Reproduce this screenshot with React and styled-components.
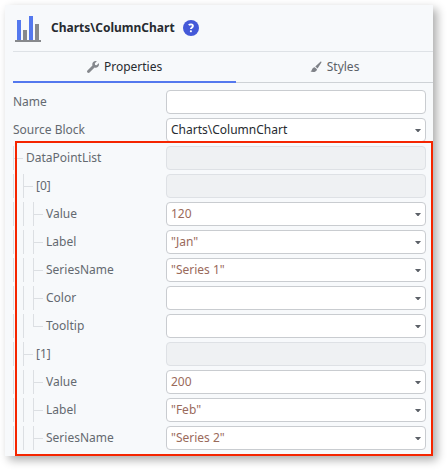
import React, { useId, useState } from "react";
import styled, { createGlobalStyle, css } from "styled-components";

const GlobalStyle = createGlobalStyle`
  *, *::before, *::after { box-sizing: border-box; }
  body {
    margin: 0;
    background: #fff;
    color: #272b30;
    font: 12px/20px "Noto Sans", "Open Sans", sans-serif;
  }
  button, input, select { font: inherit; }
`;

const Panel = styled.main`
  margin: 5px 15px 15px 5px;
  padding: 0 0 6px 8px;
  background: #f7f9fb;
  box-shadow: 4px 4px 9px rgba(0, 0, 0, 0.33);
`;

const Header = styled.header`
  display: flex;
  align-items: center;
  height: 47px;
  border-bottom: 1px solid #dee2e6;
`;

const Title = styled.h1`
  margin: 0 8px 0 8px;
  font-size: 12px;
  line-height: 20px;
  font-weight: 700;
`;

const HelpButton = styled.button`
  display: flex;
  padding: 0;
  border: 0;
  background: none;
`;

const Tabs = styled.div`
  display: flex;
  height: 31px;
`;

const Tab = styled.button`
  display: flex;
  flex: ${(p) => (p.$wide ? 17 : 15)} 1 0;
  align-items: center;
  justify-content: center;
  gap: 5px;
  padding: 0 0 2px;
  border: 0;
  background: none;
  color: #5c6168;
  box-shadow: inset 0 -1px #ced2d6;
  ${(p) =>
    p.$active &&
    css`
      color: #272b30;
      box-shadow: inset 0 -2px #5478ee;
    `}
`;

const Rows = styled.div`
  display: grid;
  gap: 4px;
`;

const Fields = styled(Rows)`
  padding: 7px 7px 0 0;
`;

const Group = styled(Rows)`
  position: relative;
`;

const Highlight = styled.div`
  position: absolute;
  inset: -5px -7px -6px 2px;
  border: 2px solid #f52500;
  pointer-events: none;
`;

const Row = styled.div`
  display: grid;
  grid-template-columns: minmax(0, 153fr) minmax(0, 260fr);
  height: 24px;
`;

const LabelCell = styled.div`
  display: flex;
`;

const Label = styled.label`
  padding-left: ${(p) => (p.$nested ? 3 : 0)}px;
  line-height: 24px;
  color: #646970;
  white-space: nowrap;
`;

const Guide = styled.span`
  width: 10px;
  border-left: 1px solid #dcdfe3;
`;

const Branch = styled.span`
  display: flex;
  flex-direction: column;
  width: 10px;
  &::before {
    content: "";
    height: 13px;
    border: solid #dcdfe3;
    border-width: 0 0 1px 1px;
  }
  &::after {
    content: "";
    flex: 1;
    border-left: 1px solid ${(p) => (p.$last ? "transparent" : "#dcdfe3")};
  }
`;

const control = css`
  width: 100%;
  height: 24px;
  padding: 0 20px 0 4px;
  border: 1px solid #c9ccd0;
  border-radius: 4px;
  background: #fff;
  color: #272b30;
`;

const TextBox = styled.input`
  ${control}
  &:disabled {
    border-color: #dee1e5;
    background: #eff1f3;
  }
`;

const SelectWrap = styled.div`
  position: relative;
`;

const Select = styled.select`
  ${control}
  display: block;
  appearance: none;
  color: ${(p) => (p.$expression ? "#9a6a5b" : "#272b30")};
`;

const Caret = styled.svg`
  position: absolute;
  right: 5px;
  top: 11px;
  pointer-events: none;
`;

function ChartIcon() {
  return (
    <svg width="30" height="28" viewBox="0 0 30 28" shapeRendering="crispEdges" aria-hidden="true">
      <path fill="#5478ee" d="M4 6h4v20H4zM16 2h4v24h-4z" />
      <path fill="#87898c" d="M10 16h4v10h-4zM22 10h4v16h-4zM2 26h26v2H2z" />
    </svg>
  );
}

function HelpIcon() {
  return (
    <svg width="16" height="16" viewBox="0 0 16 16" aria-hidden="true">
      <circle cx="8" cy="8" r="8" fill="#4459d8" />
      <path d="M5.8 5.2C6.6 4.2 9.9 3.7 9.9 5.9c0 1.5-2 1.5-2 3.2" fill="none" stroke="#fff" strokeWidth="1.9" />
      <rect x="6.9" y="10.2" width="2" height="2" rx="0.7" fill="#fff" />
    </svg>
  );
}

function WrenchIcon() {
  return (
    <svg width="12" height="12" viewBox="0 0 512 512" fill="#85888d" aria-hidden="true">
      <path d="M507.7 109.1c-2.2-9-13.5-12.1-20.1-5.5l-74.4 74.4-67.9-11.3-11.3-67.9 74.4-74.4c6.6-6.6 3.4-17.9-5.7-20.2-47.4-11.7-99.6 1-136.6 38-39.6 39.6-50.5 97.1-34.1 147.2L18.7 402.8c-25 25-25 65.5 0 90.5s65.5 25 90.5 0l213.2-213.2c50.1 16.7 107.5 5.7 147.4-34.2 37.1-37 49.7-89.3 37.9-136.8z" />
    </svg>
  );
}

function BrushIcon() {
  return (
    <svg width="12" height="12" viewBox="0 0 12 12" fill="#7f8288" aria-hidden="true">
      <path d="M10.4.7c.5-.4 1.3.2 1 .9L7.6 7.6 5.3 5.6zM4.7 6.2l2.3 2C6.8 10.6 3.9 11.7.4 10.6 2.2 10 1.8 6.5 4.7 6.2z" />
    </svg>
  );
}

function Field({ label, kind = "select", value = "", depth = 0, last = false, expression = false }) {
  const id = useId();
  return (
    <Row>
      <LabelCell>
        {Array.from({ length: Math.max(depth - 1, 0) }, (_, i) => (
          <Guide key={i} />
        ))}
        {depth > 0 && <Branch $last={last} />}
        <Label htmlFor={id} $nested={depth > 0}>
          {label}
        </Label>
      </LabelCell>
      {kind === "select" ? (
        <SelectWrap>
          <Select id={id} defaultValue={value} $expression={expression}>
            <option>{value}</option>
          </Select>
          <Caret width="6" height="3" viewBox="0 0 6 3" aria-hidden="true">
            <path d="M0 0h6L3.5 3h-1z" fill="#5c6168" />
          </Caret>
        </SelectWrap>
      ) : (
        <TextBox id={id} type="text" defaultValue={value} disabled={kind === "disabled"} />
      )}
    </Row>
  );
}

const dataPoints = [
  { label: "DataPointList", depth: 1, kind: "disabled" },
  { label: "[0]", depth: 2, kind: "disabled" },
  { label: "Value", depth: 3, value: "120" },
  { label: "Label", depth: 3, value: '"Jan"' },
  { label: "SeriesName", depth: 3, value: '"Series 1"' },
  { label: "Color", depth: 3 },
  { label: "Tooltip", depth: 3, last: true },
  { label: "[1]", depth: 2, kind: "disabled" },
  { label: "Value", depth: 3, value: "200" },
  { label: "Label", depth: 3, value: '"Feb"' },
  { label: "SeriesName", depth: 3, value: '"Series 2"' },
];

export default function App() {
  const [tab, setTab] = useState("properties");
  return (
    <>
      <GlobalStyle />
      <Panel>
        <Header>
          <ChartIcon />
          <Title>Charts\ColumnChart</Title>
          <HelpButton type="button" aria-label="Help">
            <HelpIcon />
          </HelpButton>
        </Header>
        <Tabs role="tablist">
          <Tab
            type="button"
            role="tab"
            $wide
            $active={tab === "properties"}
            aria-selected={tab === "properties"}
            onClick={() => setTab("properties")}
          >
            <WrenchIcon />
            Properties
          </Tab>
          <Tab
            type="button"
            role="tab"
            $active={tab === "styles"}
            aria-selected={tab === "styles"}
            onClick={() => setTab("styles")}
          >
            <BrushIcon />
            Styles
          </Tab>
        </Tabs>
        <Fields>
          <Field label="Name" kind="text" />
          <Field label="Source Block" value="Charts\ColumnChart" />
          <Group>
            {dataPoints.map((point, i) => (
              <Field key={i} expression {...point} />
            ))}
            <Highlight />
          </Group>
        </Fields>
      </Panel>
    </>
  );
}
